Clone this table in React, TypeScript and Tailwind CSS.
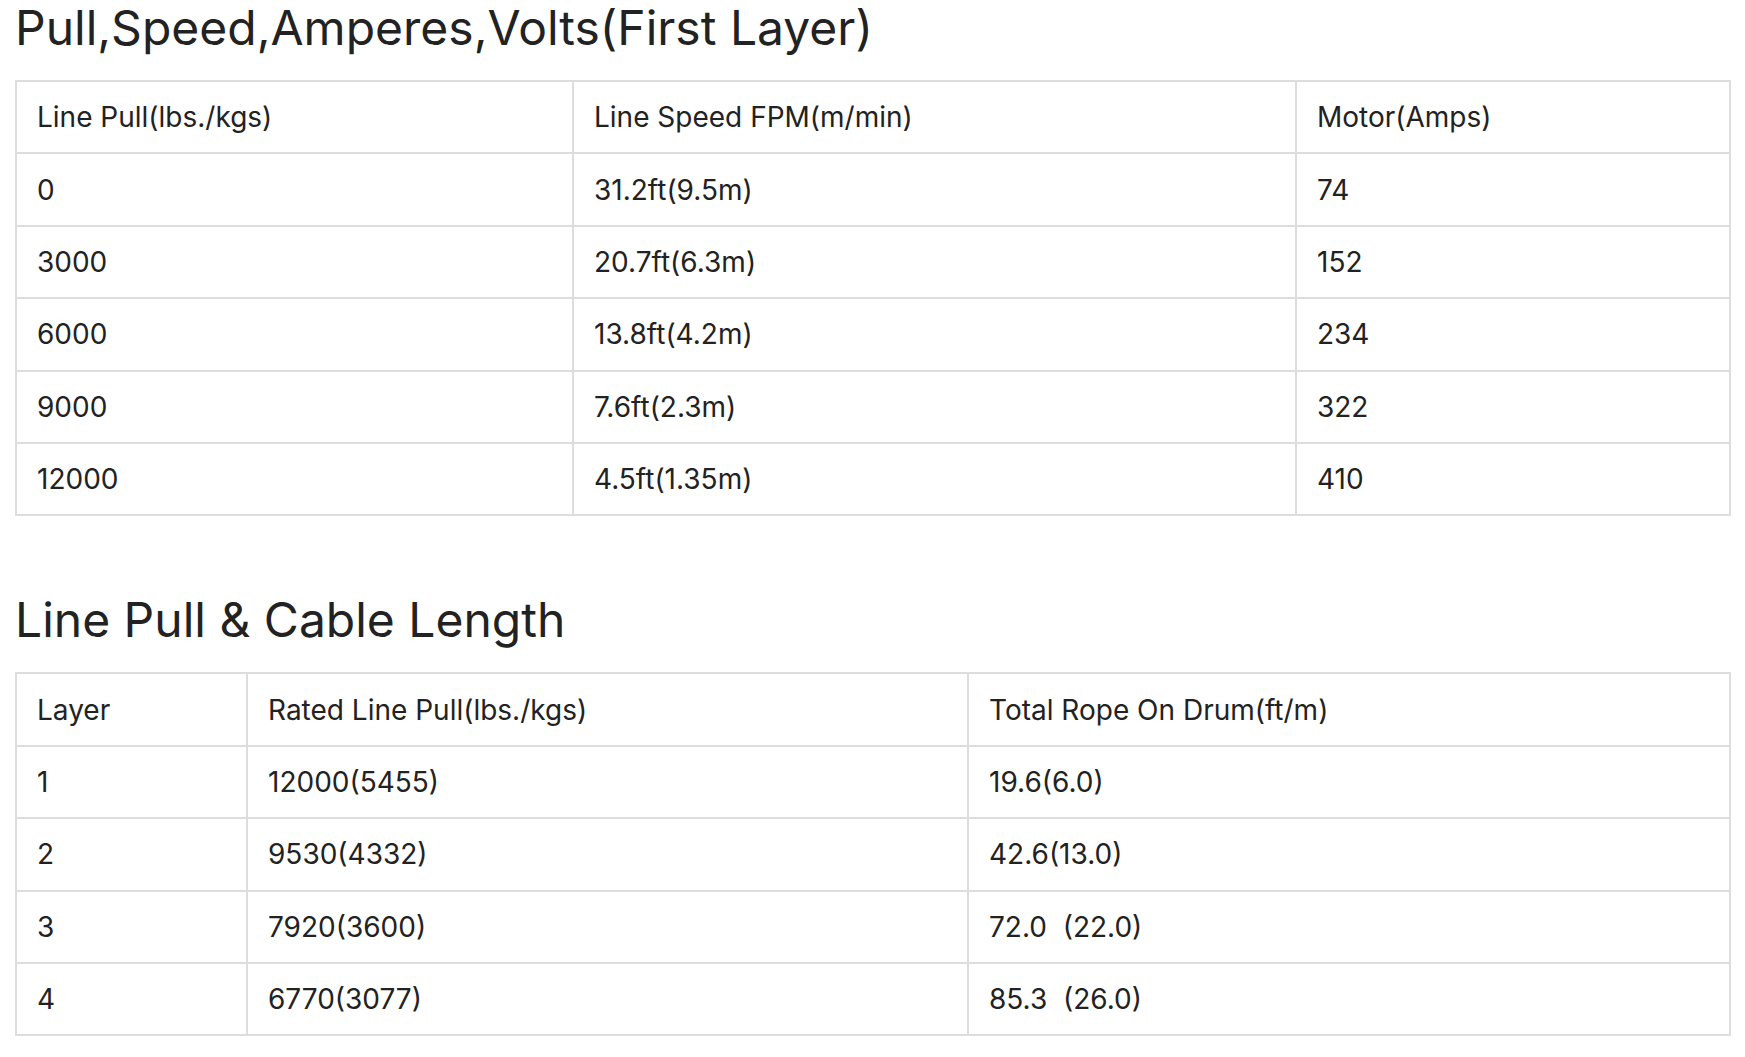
import React from "react";

const font = { fontFamily: "Inter, 'Noto Sans', sans-serif" };

type TableProps = {
  widths: number[];
  rows: string[][];
};

function SpecTable({ widths, rows }: TableProps) {
  return (
    <table className="w-[1714px] table-fixed border-collapse border-2 border-[#dddddd]">
      <colgroup>
        {widths.map((w, i) => (
          <col key={i} style={{ width: w }} />
        ))}
      </colgroup>
      <tbody>
        {rows.map((r, i) => (
          <tr key={i}>
            {r.map((c, j) => (
              <td
                key={j}
                className="h-[72.4px] border-2 border-[#dddddd] px-5 py-0 align-middle text-[28px] leading-[34px] text-[#222222]"
              >
                {c}
              </td>
            ))}
          </tr>
        ))}
      </tbody>
    </table>
  );
}

export default function App() {
  const t1 = [
    ["Line Pull(lbs./kgs)", "Line Speed FPM(m/min)", "Motor(Amps)"],
    ["0", "31.2ft(9.5m)", "74"],
    ["3000", "20.7ft(6.3m)", "152"],
    ["6000", "13.8ft(4.2m)", "234"],
    ["9000", "7.6ft(2.3m)", "322"],
    ["12000", "4.5ft(1.35m)", "410"],
  ];
  const t2 = [
    ["Layer", "Rated Line Pull(lbs./kgs)", "Total Rope On Drum(ft/m)"],
    ["1", "12000(5455)", "19.6(6.0)"],
    ["2", "9530(4332)", "42.6(13.0)"],
    ["3", "7920(3600)", "72.0\u00a0\u00a0(22.0)"],
    ["4", "6770(3077)", "85.3\u00a0\u00a0(26.0)"],
  ];
  return (
    <div className="min-h-[1057px] bg-white pl-[15px]" style={font}>
      <h2 className="m-0 text-[48px] font-normal leading-[56px] text-[#222222]">
        Pull,Speed,Amperes,Volts(First Layer)
      </h2>
      <div className="mt-[24px]">
        <SpecTable widths={[557, 723, 434]} rows={t1} />
      </div>
      <h2 className="m-0 mt-[78px] text-[48px] font-normal leading-[52px] text-[#222222]">
        Line Pull &amp; Cable Length
      </h2>
      <div className="mt-[26px]">
        <SpecTable widths={[231, 721, 762]} rows={t2} />
      </div>
    </div>
  );
}
